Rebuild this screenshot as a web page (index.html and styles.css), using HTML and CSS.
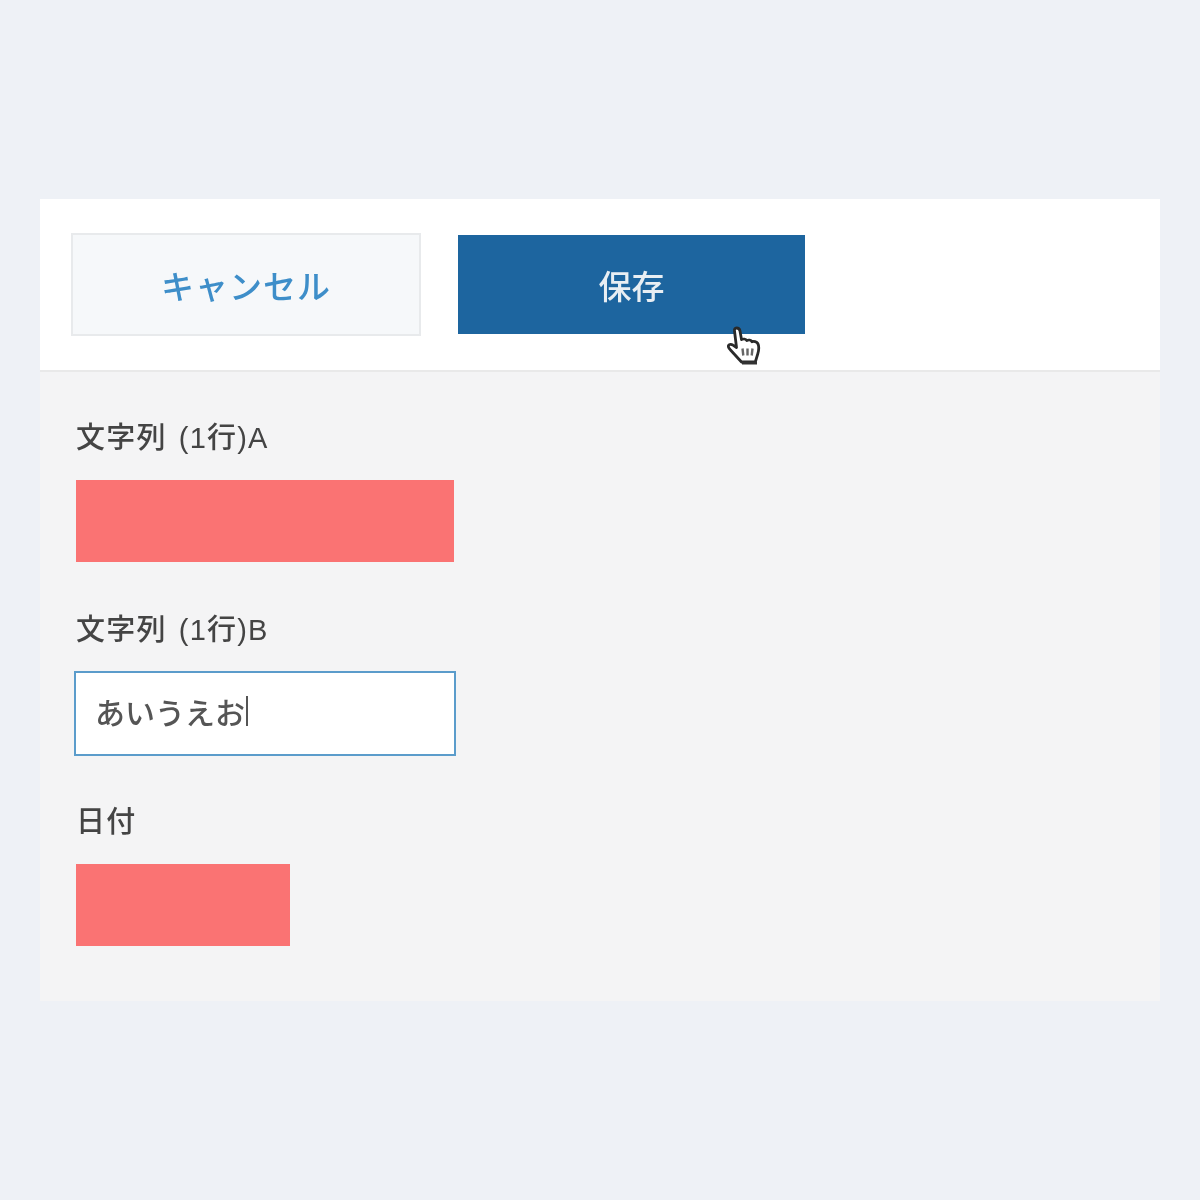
FILE: index.html
```html
<!DOCTYPE html>
<html lang="ja">
<head>
    <meta charset="UTF-8">
    <meta name="viewport" content="width=device-width, initial-scale=1.0">
    <title>レコードの編集</title>
    <link rel="stylesheet" href="styles.css">
</head>
<body>
    <div class="record-card">
        <div class="toolbar">
            <button class="cancel-button">キャンセル</button>
            <button class="save-button">保存</button>
            <svg class="hand-cursor" width="40" height="44" viewBox="0 0 40 44">
                <path d="M12.500 4c2 0 3.200 1.300 3.500 3l1.500 8.500c1.700-.8 4.300-.6 5.300 1 1.500-.8 4.200-.5 5.200 1.200 1.700-.7 4.700-.2 5.800 1.800 1.300 2.500 1.100 6.700-.1 10.700l-2.400 7.800H17.500L6.500 26c-1.500-1.700-2.800-3-2-4.600.9-1.600 3-1.300 4.500-.2l3.500 2.300L10.500 7c-.3-1.700.5-3 2-3z" fill="#fff" stroke="#2a2a2a" stroke-width="2.800" stroke-linejoin="round"/>
                <path d="M18.500 24.500l.8 7M23.500 24.500v7M28.500 24.500l-.8 7" stroke="#666" stroke-width="2.400"/>
                <path d="M18 37.500h15v3H18z" fill="#333"/>
            </svg>
        </div>
        <div class="form-area">
            <div class="field">
                <div class="field-label">文字列 (1行)A</div>
                <div class="masked-value"></div>
            </div>
            <div class="field">
                <div class="field-label">文字列 (1行)B</div>
                <div class="text-input">あいうえお<span class="caret"></span></div>
            </div>
            <div class="field">
                <div class="field-label">日付</div>
                <div class="masked-value masked-date"></div>
            </div>
        </div>
    </div>
</body>
</html>
```

FILE: styles.css
```css
* {
    margin: 0;
    padding: 0;
    box-sizing: border-box;
    font-family: "Liberation Sans", "Noto Sans CJK JP", sans-serif;
}

body {
    background-color: #eef1f6;
    padding: 199px 40px 0;
}

.record-card {
    width: 1120px;
    filter: blur(0.6px);
}

.toolbar {
    position: relative;
    display: flex;
    align-items: center;
    gap: 37px;
    height: 173px;
    padding: 0 31px;
    background-color: #ffffff;
    border-bottom: 2px solid #e9e9e9;
}

.cancel-button {
    width: 350px;
    height: 103px;
    border: 2px solid #e8eaec;
    background-color: #f6f8fa;
    color: #3e8ec9;
    font-size: 33px;
    font-weight: 500;
    letter-spacing: 1px;
}

.save-button {
    width: 347px;
    height: 99px;
    border: none;
    background-color: #1d659f;
    color: #e8eef3;
    font-size: 33px;
    font-weight: 500;
}

.hand-cursor {
    position: absolute;
    left: 684px;
    top: 125px;
}

.form-area {
    display: flex;
    flex-direction: column;
    gap: 48px;
    height: 629px;
    padding: 46px 36px 0;
    background-color: #f4f4f5;
}

.field-label {
    height: 40px;
    margin-bottom: 22px;
    color: #444444;
    font-size: 29px;
    font-weight: 500;
    line-height: 40px;
    letter-spacing: 1.2px;
    word-spacing: 3px;
}

.masked-value {
    width: 378px;
    height: 82px;
    background-color: #fa7373;
}

.masked-date {
    width: 214px;
}

.text-input {
    display: flex;
    align-items: center;
    width: 382px;
    height: 85px;
    margin: -1px 0 -2px -2px;
    padding: 0 0 5px 19px;
    border: 2px solid #5b9ccb;
    background-color: #ffffff;
    color: #555555;
    font-size: 30px;
    font-weight: 500;
}

.caret {
    width: 2px;
    height: 30px;
    margin-left: 1px;
    background-color: #555555;
}
```
